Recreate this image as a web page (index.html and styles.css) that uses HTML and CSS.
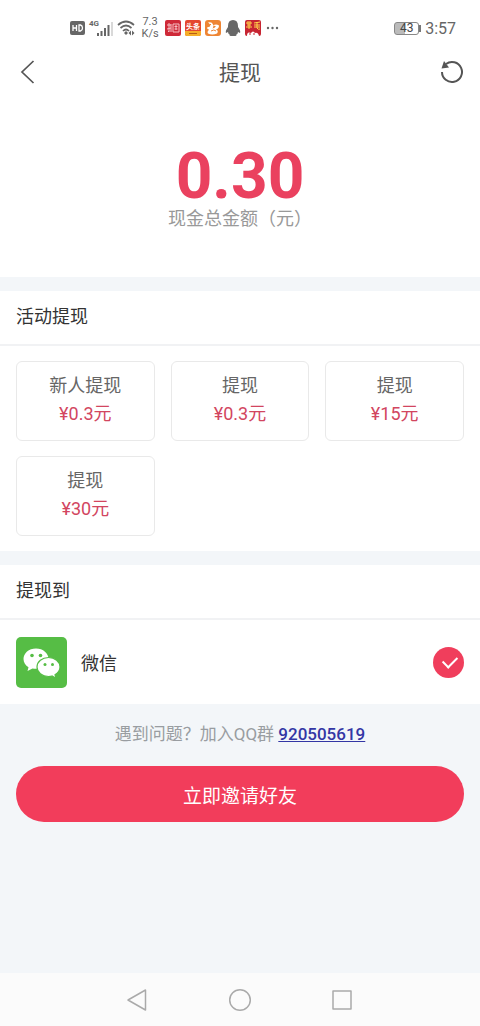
FILE: index.html
```html
<!DOCTYPE html>
<html lang="zh-CN">
<head>
<meta charset="utf-8">
<meta name="viewport" content="width=device-width, initial-scale=1">
<title>提现</title>
<link rel="stylesheet" href="styles.css">
</head>
<body>
<div class="status">
  <div class="status-left">
    <svg class="hd" width="15" height="14" viewBox="0 0 15 14"><rect width="15" height="14" rx="2" fill="#666"/><path d="M3 4v6M6.500 4v6M3 7h3.500M9 4v6h1.500q2-.5 2-3t-2-3z" fill="none" stroke="#fff" stroke-width="1.300"/></svg>
    <div class="signal"><span class="net">4G</span>
      <svg width="16" height="14" viewBox="0 0 16 14"><path d="M1 14v-3M4.500 14V9M8 14V6M11.500 14V3" stroke="#666" stroke-width="2"/><path d="M15 14V0" stroke="#ccc" stroke-width="1.500"/></svg>
    </div>
    <svg class="wifi" width="18" height="16" viewBox="0 0 18 16" fill="none" stroke="#666" stroke-width="1.700"><path d="M1 5Q9 -2 17 5M3.500 8Q9 3 14.500 8M6 11q3-3 6 0"/><path d="M9 11l2 2-2 2-2-2zM14 10.500l-2.500 2.500 2.500 2.500zM15 10.500l2.500 2.500-2.500 2.500z" fill="#666" stroke="none"/></svg>
    <div class="speed"><span>7.3</span><span>K/s</span></div>
    <div class="apps">
      <svg width="16" height="16" viewBox="0 0 16 16"><rect width="16" height="16" rx="2" fill="#cf2938"/><path d="M2 5h4M4 3v9l-1-1M2 9l4-1M6 4v8M8 4h6v8H8zM9.500 6.500h3M11 5v5M9.500 9h3" fill="none" stroke="#f6bfc3"/></svg>
      <svg width="16" height="16" viewBox="0 0 16 16"><rect width="16" height="16" rx="2" fill="#e4472f"/><path d="M0 11h16v3q0 2-2 2H2q-2 0-2-2z" fill="#f5ae28"/><text x="8" y="9" class="app-text">头条</text><path d="M4 13.500h8" stroke="#b65b16"/></svg>
      <svg width="16" height="16" viewBox="0 0 16 16"><rect width="16" height="16" rx="3" fill="#ee8534"/><path d="M3 2.500q4-1 5 2t-1 4q2 0 4-2-2-1-3-1 3-2 6 0 0 3-3 4 3 1 1 4-5 2-9 0-1-2 1-4-2 0-2-2l3-1q1-2-2-4z" fill="#fff"/><path d="M6 11q3-2 5 0M5 4l1 1" stroke="#ee8534" fill="none"/></svg>
      <svg width="16" height="16" viewBox="0 0 16 16"><path d="M8 0Q3 0 3 6v1Q0 11 1 13l2-1q0 2 2 3-2 1 3 1t3-1q2-1 2-3l2 1q1-2-2-6V6q0-6-5-6z" fill="#686868"/></svg>
      <svg width="16" height="16" viewBox="0 0 16 16"><rect width="16" height="16" rx="2" fill="#c72532"/><path d="M1 3h6M3 1v3M5 1v3M2 5h4M1 7h6M4 4v5" stroke="#ffd54a" fill="none"/><path d="M9 3l6-1M9 5h6M9 7h6M12 2v6q1 2 3 1" stroke="#ffd54a" fill="none"/><path d="M2 16q0-5 4-3 2-3 4 0 3-1 4 3z" fill="#fff"/><path d="M5 13v2M9 13v2" stroke="#c72532"/></svg>
    </div>
    <svg class="dots" width="13" height="4" viewBox="0 0 13 4" fill="#666"><circle cx="2" cy="2" r="1.200"/><circle cx="6.500" cy="2" r="1.200"/><circle cx="11" cy="2" r="1.200"/></svg>
  </div>
  <div class="status-right">
    <div class="battery"><span>43</span></div>
    <span class="time">3:57</span>
  </div>
</div>

<header class="header">
  <button class="icon-button" aria-label="返回"><svg width="16" height="24" viewBox="0 0 16 24" fill="none" stroke="#555" stroke-width="1.700"><path d="M13.500 1L2 12l11.500 11"/></svg></button>
  <h1>提现</h1>
  <button class="icon-button" aria-label="刷新"><svg width="24" height="24" viewBox="0 0 24 24" fill="none" stroke="#555" stroke-width="2"><path d="M6 4A10 10 0 1 1 2 12"/><path d="M1.500 8.500L4 1l5 6.500z" fill="#555" stroke="none"/></svg></button>
</header>

<main class="main">
  <section class="balance">
    <strong>0.30</strong>
    <p>现金总金额（元）</p>
  </section>

  <section class="panel">
    <h2>活动提现</h2>
    <div class="options">
      <button class="option"><span>新人提现</span><span class="price">¥0.3元</span></button>
      <button class="option"><span>提现</span><span class="price">¥0.3元</span></button>
      <button class="option"><span>提现</span><span class="price">¥15元</span></button>
      <button class="option"><span>提现</span><span class="price">¥30元</span></button>
    </div>
  </section>

  <section class="panel">
    <h2>提现到</h2>
    <label class="method">
      <svg width="51" height="51" viewBox="0 0 51 51"><rect width="51" height="51" rx="5" fill="#56bd45"/><path d="M20 11.500c-7.200 0-12.500 4.700-12.500 10.500 0 3.500 2 6.400 5 8.200L11.500 34l5-2.600c1.200.3 2.300.4 3.500.4 7.200 0 12.500-4.400 12.500-9.900S27.200 11.500 20 11.500z" fill="#fff"/><path d="M32.500 20.500c-6.400 0-11.500 4.200-11.500 9.500s5.100 9.500 11.500 9.500q1.800 0 3.500-.5l4 2.200-1-3.500c3-1.800 5-4.500 5-7.700 0-5.300-5.100-9.500-11.500-9.500z" fill="#fff" stroke="#56bd45" stroke-width="1.200"/><g fill="#56bd45"><circle cx="16" cy="18.500" r="1.800"/><circle cx="24.500" cy="18.500" r="1.800"/><circle cx="29" cy="27.500" r="1.500"/><circle cx="36.500" cy="27.500" r="1.500"/></g></svg>
      <span>微信</span>
      <input type="radio" name="method" checked>
    </label>
  </section>

  <p class="help">遇到问题？加入QQ群 <a href="#">920505619</a></p>
  <button class="invite">立即邀请好友</button>
</main>

<nav class="nav">
  <button class="icon-button" aria-label="后退"><svg width="22" height="24" viewBox="0 0 22 24"><path d="M19.500 2v20L2 12z"/></svg></button>
  <button class="icon-button" aria-label="主屏幕"><svg width="24" height="24" viewBox="0 0 24 24"><circle cx="12" cy="12" r="10.300"/></svg></button>
  <button class="icon-button" aria-label="最近任务"><svg width="22" height="22" viewBox="0 0 22 22"><rect x="2" y="2" width="18" height="18"/></svg></button>
</nav>
</body>
</html>
```
FILE: styles.css
```css
* { box-sizing: border-box; }
body {
  margin: 0;
  min-height: 100vh;
  display: flex;
  flex-direction: column;
  background: #fff;
  color: #333;
  font-family: Roboto, "Noto Sans CJK SC", sans-serif;
  font-size: 18px;
}
h1, h2, p { margin: 0; font-weight: 400; }
button { font: inherit; border: 0; background: none; padding: 0; }
svg { display: block; flex: none; }

.status {
  height: 48px;
  padding: 8px 24px 0 70px;
  display: flex;
  align-items: center;
  justify-content: space-between;
  color: #666;
}
.status-left { display: flex; align-items: center; gap: 4px; }
.status-right { display: flex; align-items: center; gap: 6px; }
.signal { display: flex; }
.net { font-size: 8px; line-height: 8px; font-weight: 700; }
.signal svg { margin-left: -2px; margin-top: 2px; }
.speed {
  width: 22px;
  display: flex;
  flex-direction: column;
  align-items: center;
  font-size: 11px;
  line-height: 12px;
}
.apps { display: flex; gap: 4px; }
.app-text {
  font-size: 7px;
  font-weight: 700;
  fill: #fff;
  text-anchor: middle;
}
.dots { margin-left: 1px; }
.battery {
  position: relative;
  width: 25px;
  height: 13px;
  border: 1px solid #888;
  border-radius: 3px;
  background: linear-gradient(90deg, #bbb 43%, #fff 43%);
  font-size: 12px;
  line-height: 11px;
  text-align: center;
  color: #444;
}
.battery::after {
  content: "";
  position: absolute;
  right: -3px;
  top: 2px;
  width: 2px;
  height: 7px;
  background: #777;
}
.time { font-size: 16px; }

.header {
  height: 48px;
  padding: 0 16px;
  display: flex;
  align-items: center;
  justify-content: space-between;
}
.header .icon-button { width: 24px; }
.header .icon-button svg { margin-left: auto; margin-right: auto; }
.header h1 { padding-bottom: 2px; font-size: 21px; color: #555; }

.main {
  flex: 1;
  background: #f3f6f9;
  display: flex;
  flex-direction: column;
}
.balance {
  background: #fff;
  padding: 51px 16px 46px;
  text-align: center;
}
.balance strong {
  display: block;
  font-size: 64px;
  line-height: 60px;
  color: #ea415f;
}
.balance p { line-height: 24px; color: #999; }

.panel { margin-top: 14px; background: #fff; }
.panel h2 {
  height: 55px;
  padding: 0 16px 5px;
  display: flex;
  align-items: center;
  font-size: 18px;
  border-bottom: 2px solid #f1f2f4;
}
.options {
  padding: 15px 16px;
  display: grid;
  grid-template-columns: repeat(3, 1fr);
  gap: 15px 16px;
}
.option {
  height: 80px;
  padding-bottom: 2px;
  display: flex;
  flex-direction: column;
  align-items: center;
  justify-content: center;
  border: 1px solid #e9e9e9;
  border-radius: 6px;
  color: #666;
  line-height: 28px;
}
.price { color: #d2465f; }
.method {
  height: 84px;
  padding: 0 16px;
  display: flex;
  align-items: center;
  gap: 14px;
}
.method span { flex: 1; }
.method input {
  appearance: none;
  width: 31px;
  height: 31px;
  margin: 0;
  border-radius: 50%;
  background: #f03e5c;
  display: grid;
  place-items: center;
}
.method input::before {
  content: "";
  width: 12px;
  height: 7px;
  margin: -4px 0 0 2px;
  border: solid #fff;
  border-width: 0 0 2px 2px;
  transform: rotate(-45deg);
}
.help {
  padding: 18px 16px 20px;
  text-align: center;
  font-size: 17px;
  line-height: 24px;
  color: #999da1;
}
.help a { color: #3336a5; font-weight: 500; }
.invite {
  height: 56px;
  margin: 0 16px 16px;
  border-radius: 28px;
  background: #f23d5b;
  color: #fff;
  font-size: 19px;
}
.nav {
  height: 53px;
  padding: 0 127px 0 126px;
  background: #fbfbfb;
  display: flex;
  align-items: center;
  justify-content: space-between;
}
.nav svg { fill: none; stroke: #aaa; stroke-width: 1.5; stroke-linejoin: round; }
```
